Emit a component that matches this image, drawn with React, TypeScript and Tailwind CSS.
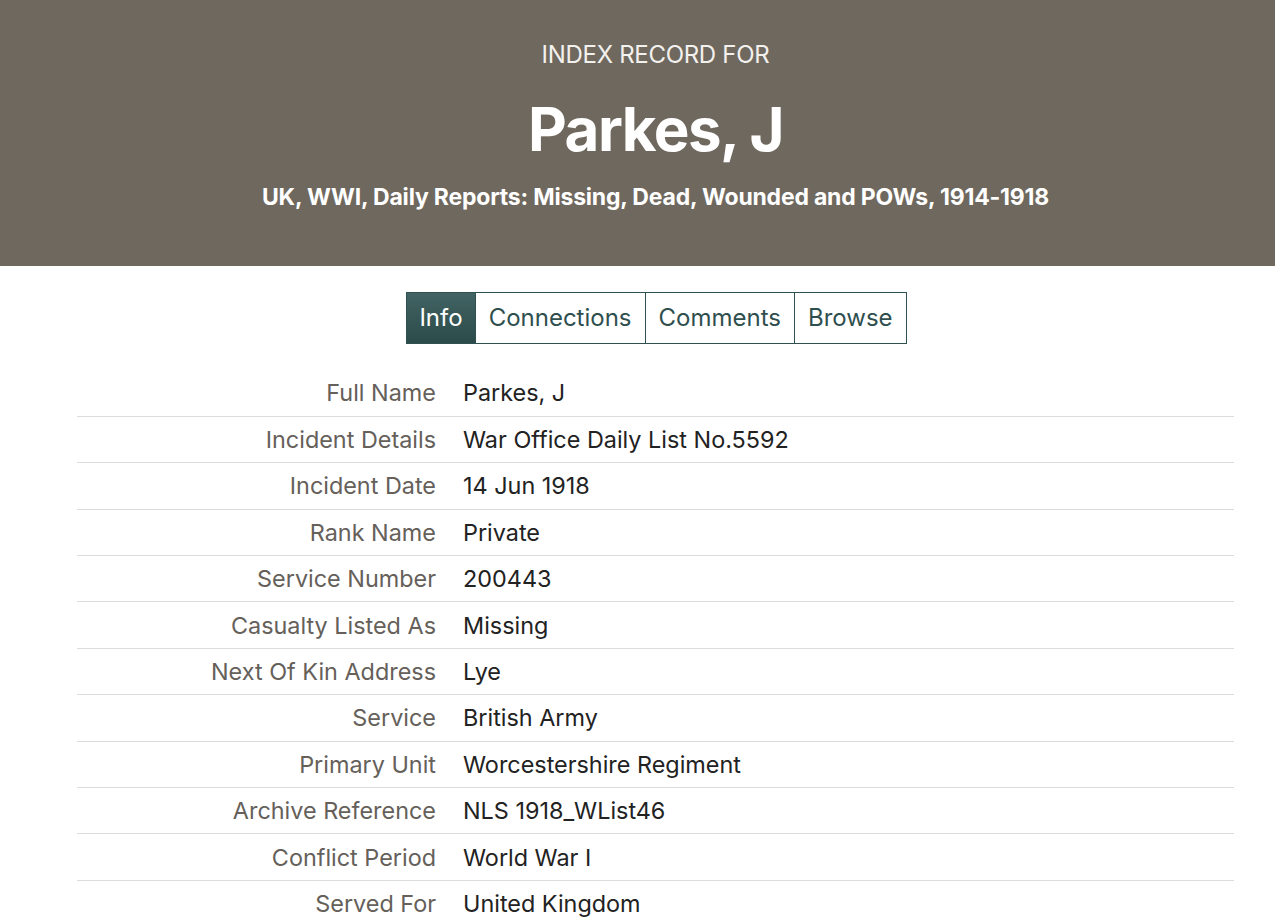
const rows: [string, string][] = [
  ['Full Name', 'Parkes, J'],
  ['Incident Details', 'War Office Daily List No.5592'],
  ['Incident Date', '14 Jun 1918'],
  ['Rank Name', 'Private'],
  ['Service Number', '200443'],
  ['Casualty Listed As', 'Missing'],
  ['Next Of Kin Address', 'Lye'],
  ['Service', 'British Army'],
  ['Primary Unit', 'Worcestershire Regiment'],
  ['Archive Reference', 'NLS 1918_WList46'],
  ['Conflict Period', 'World War I'],
  ['Served For', 'United Kingdom'],
];

const tabs = ['Info', 'Connections', 'Comments', 'Browse'];

export default function App() {
  return (
    <div className="min-h-screen bg-white font-['Inter','Liberation_Sans',sans-serif]">
      <header className="flex h-[266px] flex-col items-center bg-[#6f685e] pl-[36px] pt-[41px] text-white">
        <p className="text-[24px] leading-[28px] tracking-[-0.3px] text-[#f3f1ee]">INDEX RECORD FOR</p>
        <h1 className="mt-[25px] text-[60px] font-bold leading-[70px] tracking-[-1.5px]">Parkes, J</h1>
        <p className="mt-[19px] text-[23px] font-bold leading-[28px] tracking-[-0.2px]">
          UK, WWI, Daily Reports: Missing, Dead, Wounded and POWs, 1914-1918
        </p>
      </header>

      <nav className="mt-[26px] flex justify-center pl-[38px]">
        <div className="flex border border-[#2f5151]">
          {tabs.map((t, i) => (
            <button
              key={t}
              className={
                i === 0
                  ? 'h-[50px] bg-gradient-to-b from-[#426464] to-[#2c4a4a] px-[12px] text-[24px] text-white'
                  : 'h-[50px] border-l border-[#2f5151] bg-white px-[13px] text-[24px] text-[#2f4f4f]'
              }
            >
              {t}
            </button>
          ))}
        </div>
      </nav>

      <table className="ml-[77px] mt-[26px] w-[1157px] border-collapse">
        <tbody>
          {rows.map(([label, value], i) => (
            <tr key={label} className={i < rows.length - 1 ? 'border-b border-[#dcdcdc]' : ''}>
              <th className="h-[46.4px] w-[359px] pr-0 text-right align-middle text-[23.4px] font-normal text-[#65605a]">
                {label}
              </th>
              <td className="h-[46.4px] pl-[27px] align-middle text-[23.4px] text-[#222222]">{value}</td>
            </tr>
          ))}
        </tbody>
      </table>
    </div>
  );
}
